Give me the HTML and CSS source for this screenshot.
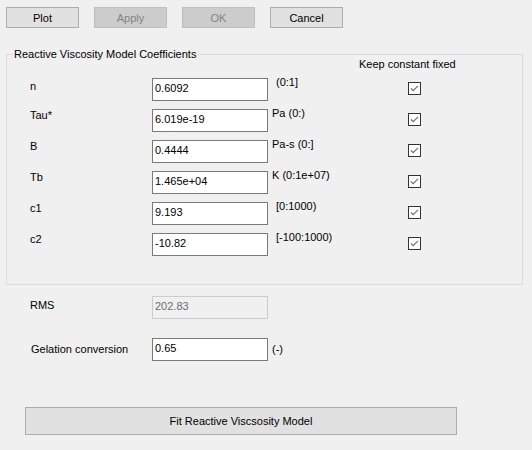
FILE: index.html
```html
<!DOCTYPE html>
<html>
<head>
<meta charset="utf-8">
<link rel="stylesheet" href="styles.css">
</head>
<body>
<div class="toolbar">
  <button class="btn">Plot</button>
  <button class="btn" disabled>Apply</button>
  <button class="btn" disabled>OK</button>
  <button class="btn">Cancel</button>
</div>

<fieldset class="group">
  <legend class="group-title">Reactive Viscosity Model Coefficients</legend>
  <div class="keep-head">Keep constant fixed</div>
  <div class="rows">
    <div class="lbl lbl-low">n</div>
    <input class="field" value="0.6092">
    <div class="unit unit-sp">(0:1]</div>
    <span class="chk"><svg width="13" height="13" viewBox="0 0 13 13"><rect x="0.5" y="0.5" width="12" height="12" fill="#fff" stroke="#333"/><path d="M3 6.5 L5.2 8.7 L10 3.9" fill="none" stroke="#707070" stroke-width="1.2"/></svg></span>

    <div class="lbl">Tau*</div>
    <input class="field" value="6.019e-19">
    <div class="unit">Pa (0:)</div>
    <span class="chk"><svg width="13" height="13" viewBox="0 0 13 13"><rect x="0.5" y="0.5" width="12" height="12" fill="#fff" stroke="#333"/><path d="M3 6.5 L5.2 8.7 L10 3.9" fill="none" stroke="#707070" stroke-width="1.2"/></svg></span>

    <div class="lbl">B</div>
    <input class="field" value="0.4444">
    <div class="unit">Pa-s (0:]</div>
    <span class="chk"><svg width="13" height="13" viewBox="0 0 13 13"><rect x="0.5" y="0.5" width="12" height="12" fill="#fff" stroke="#333"/><path d="M3 6.5 L5.2 8.7 L10 3.9" fill="none" stroke="#707070" stroke-width="1.2"/></svg></span>

    <div class="lbl">Tb</div>
    <input class="field" value="1.465e+04">
    <div class="unit">K (0:1e+07)</div>
    <span class="chk"><svg width="13" height="13" viewBox="0 0 13 13"><rect x="0.5" y="0.5" width="12" height="12" fill="#fff" stroke="#333"/><path d="M3 6.5 L5.2 8.7 L10 3.9" fill="none" stroke="#707070" stroke-width="1.2"/></svg></span>

    <div class="lbl">c1</div>
    <input class="field" value="9.193">
    <div class="unit unit-sp">[0:1000)</div>
    <span class="chk"><svg width="13" height="13" viewBox="0 0 13 13"><rect x="0.5" y="0.5" width="12" height="12" fill="#fff" stroke="#333"/><path d="M3 6.5 L5.2 8.7 L10 3.9" fill="none" stroke="#707070" stroke-width="1.2"/></svg></span>

    <div class="lbl">c2</div>
    <input class="field" value="-10.82">
    <div class="unit unit-sp">[-100:1000)</div>
    <span class="chk"><svg width="13" height="13" viewBox="0 0 13 13"><rect x="0.5" y="0.5" width="12" height="12" fill="#fff" stroke="#333"/><path d="M3 6.5 L5.2 8.7 L10 3.9" fill="none" stroke="#707070" stroke-width="1.2"/></svg></span>
  </div>
</fieldset>

<div class="extra">
  <div class="lbl lbl-rms">RMS</div>
  <input class="field field-disabled" value="202.83" disabled>
  <div></div>

  <div class="lbl lbl-gel">Gelation conversion</div>
  <input class="field" value="0.65">
  <div class="unit unit-gel">(-)</div>
</div>

<button class="btn btn-fit">Fit Reactive Viscsosity Model</button>
</body>
</html>
```

FILE: styles.css
```css
html, body {
  margin: 0;
  background: #f0f0f0;
}

body {
  padding: 7px 0 0 6px;
  font-family: "Liberation Sans", Arial, sans-serif;
  font-size: 11px;
  line-height: 13px;
  color: #000;
  width: 532px;
  height: 450px;
  box-sizing: border-box;
  overflow: hidden;
}

.toolbar {
  display: flex;
  gap: 15px;
}

.btn {
  width: 73px;
  height: 21px;
  padding: 0;
  margin: 0;
  background: #e1e1e1;
  border: 1px solid #adadad;
  border-radius: 0;
  font-family: inherit;
  font-size: 11px;
  color: #000;
}

.btn:disabled {
  background: #cccccc;
  border-color: #bfbfbf;
  color: #838383;
}

.group {
  margin: 20px 0 0 0;
  width: 517px;
  box-sizing: border-box;
  border: 1px solid #dcdcdc;
  padding: 0 0 28px 0;
  min-width: 0;
}

.group-title {
  margin-left: 5px;
  padding: 0 2px;
  font-size: 11px;
  line-height: 13px;
}

.keep-head {
  margin: -3px 0 0 352px;
  height: 13px;
}

.rows {
  margin: 7px 0 0 23px;
  display: grid;
  grid-template-columns: 122px 116px 140px 13px;
  grid-auto-rows: 23px;
  row-gap: 8px;
}

.lbl {
  align-self: start;
  white-space: nowrap;
}

.lbl-low {
  margin-top: 2px;
}

.field {
  box-sizing: border-box;
  width: 116px;
  height: 23px;
  margin: 0;
  padding: 2px 2px 6px 2px;
  border: 1px solid #7a7a7a;
  border-radius: 0;
  background: #fff;
  font-family: inherit;
  font-size: 11px;
  line-height: 13px;
  color: #000;
  outline: none;
}

.field-disabled {
  background: #f0f0f0;
  border-color: #cccccc;
  color: #6d6d6d;
}

.unit {
  align-self: start;
  margin-top: -2px;
  padding-left: 4px;
  white-space: nowrap;
}

.unit-sp {
  padding-left: 8px;
}

.chk {
  align-self: start;
  margin-top: 4px;
  width: 13px;
  height: 13px;
  display: block;
}

.chk svg {
  display: block;
}

.extra {
  margin-top: 11px;
  padding-left: 24px;
  display: grid;
  grid-template-columns: 122px 116px 60px;
  grid-template-rows: 23px 23px;
  row-gap: 19px;
}

.lbl-rms {
  margin-top: 3px;
}

.lbl-gel {
  margin-top: 5px;
  padding-left: 1px;
}

.unit-gel {
  margin-top: 5px;
  padding-left: 4px;
}

.btn-fit {
  display: block;
  margin: 46px 0 0 19px;
  width: 432px;
  height: 28px;
  background: #e1e1e1;
  border: 1px solid #adadad;
}
```
